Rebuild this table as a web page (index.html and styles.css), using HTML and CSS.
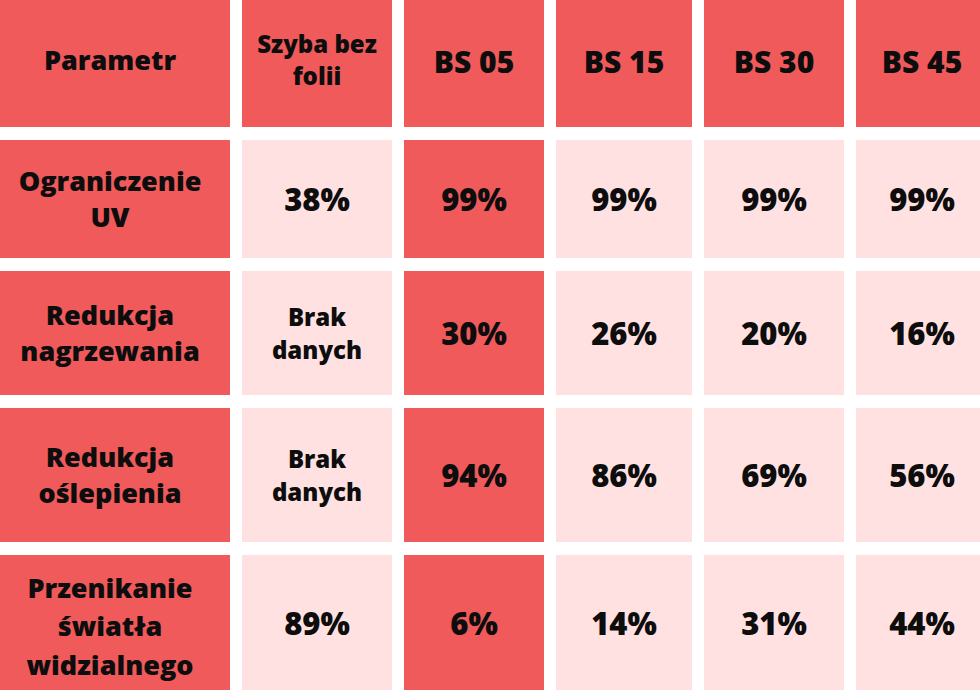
FILE: index.html
```html
<!DOCTYPE html>
<html lang="pl">
<head>
<meta charset="utf-8">
<title>Porównanie folii</title>
<link rel="stylesheet" href="styles.css">
</head>
<body>
<div class="table">
  <div class="cell red head param">Parametr</div>
  <div class="cell red head sub">Szyba bez<br>folii</div>
  <div class="cell red head">BS 05</div>
  <div class="cell red head">BS 15</div>
  <div class="cell red head">BS 30</div>
  <div class="cell red head">BS 45</div>

  <div class="cell red label">Ograniczenie<br>UV</div>
  <div class="cell pink val">38%</div>
  <div class="cell red val">99%</div>
  <div class="cell pink val">99%</div>
  <div class="cell pink val">99%</div>
  <div class="cell pink val">99%</div>

  <div class="cell red label">Redukcja<br>nagrzewania</div>
  <div class="cell pink sub">Brak<br>danych</div>
  <div class="cell red val">30%</div>
  <div class="cell pink val">26%</div>
  <div class="cell pink val">20%</div>
  <div class="cell pink val">16%</div>

  <div class="cell red label">Redukcja<br>oślepienia</div>
  <div class="cell pink sub">Brak<br>danych</div>
  <div class="cell red val">94%</div>
  <div class="cell pink val">86%</div>
  <div class="cell pink val">69%</div>
  <div class="cell pink val">56%</div>

  <div class="cell red label tall">Przenikanie<br>światła<br>widzialnego</div>
  <div class="cell pink val">89%</div>
  <div class="cell red val">6%</div>
  <div class="cell pink val">14%</div>
  <div class="cell pink val">31%</div>
  <div class="cell pink val">44%</div>
</div>
</body>
</html>
```

FILE: styles.css
```css
html, body {
  margin: 0;
  padding: 0;
  background: #ffffff;
  width: 980px;
  height: 690px;
  overflow: hidden;
}

.table {
  display: grid;
  grid-template-columns: 230px 150px 140px 136px 140px 1fr;
  grid-template-rows: 127px 118px 124px 134px 1fr;
  column-gap: 12px;
  row-gap: 13px;
  width: 988px;
  height: 690px;
  font-family: "Open Sans", "Liberation Sans", sans-serif;
  font-weight: 800;
  color: #0d0d0d;
}

.cell {
  display: flex;
  align-items: center;
  justify-content: center;
  text-align: center;
}

.red { background: #f05a5a; }
.pink { background: #ffe1e1; }

.head { font-size: 30px; line-height: 1.2; padding-bottom: 4px; }
.param { font-size: 27px; padding-bottom: 6px; padding-right: 10px; }
.head.sub { font-size: 24px; line-height: 1.33; padding-bottom: 8px; }
.sub { font-size: 24px; line-height: 1.38; }
.label { font-size: 27px; line-height: 1.33; padding-right: 10px; }
.tall { line-height: 1.42; padding-top: 8px; }
.val { font-size: 31px; }
```
